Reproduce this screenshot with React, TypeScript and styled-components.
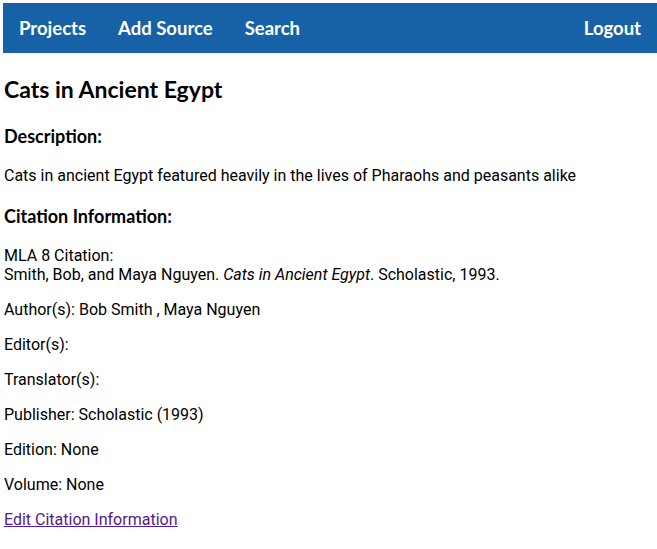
import { createGlobalStyle } from "styled-components";
import styled from "styled-components";

const GlobalStyle = createGlobalStyle`
  body {
    margin: 0;
    padding: 3px 0 0 3px;
    background: #ffffff;
    color: #000000;
    font-family: Roboto, "Liberation Sans", sans-serif;
    font-size: 16px;
  }
`;

type Field = {
  label: string;
  value: string;
};

const fields: Field[] = [
  { label: "Author(s):", value: "Bob Smith , Maya Nguyen" },
  { label: "Editor(s):", value: "" },
  { label: "Translator(s):", value: "" },
  { label: "Publisher:", value: "Scholastic (1993)" },
  { label: "Edition:", value: "None" },
  { label: "Volume:", value: "None" },
];

const App = () => {
  return (
    <>
      <GlobalStyle />
      <NavBar>
        <NavLink href="#">Projects</NavLink>
        <NavLink href="#">Add Source</NavLink>
        <NavLink href="#">Search</NavLink>
        <NavLink href="#" $right>
          Logout
        </NavLink>
      </NavBar>
      <Main>
        <Title>Cats in Ancient Egypt</Title>
        <Heading>Description:</Heading>
        <Text>
          Cats in ancient Egypt featured heavily in the lives of Pharaohs and
          peasants alike
        </Text>
        <Heading>Citation Information:</Heading>
        <Text>
          MLA 8 Citation:
          <br />
          Smith, Bob, and Maya Nguyen. <i>Cats in Ancient Egypt</i>.
          Scholastic, 1993.
        </Text>
        {fields.map((f) => (
          <Text key={f.label}>
            {f.label} {f.value}
          </Text>
        ))}
        <EditLink href="#">Edit Citation Information</EditLink>
      </Main>
    </>
  );
};

const NavBar = styled.nav`
  display: flex;
  align-items: center;
  height: 50px;
  padding: 0 16px;
  gap: 32px;
  background: #1762a7;
`;

const NavLink = styled.a<{ $right?: boolean }>`
  color: #ffffff;
  text-decoration: none;
  font-family: Lato, "Noto Sans", sans-serif;
  font-weight: 700;
  font-size: 18.5px;
  margin-left: ${(p) => (p.$right ? "auto" : "0")};
`;

const Main = styled.main`
  padding: 0 1px;
`;

const Title = styled.h1`
  font-family: Lato, "Noto Sans", sans-serif;
  font-weight: 700;
  font-size: 23px;
  margin: 22px 0 22px;
`;

const Heading = styled.h2`
  font-family: Lato, "Noto Sans", sans-serif;
  font-weight: 700;
  font-size: 18px;
  margin: 20px 0 19px;
`;

const Text = styled.p`
  margin: 16px 0;
`;

const EditLink = styled.a`
  color: #551a8b;
  text-decoration: underline;
`;

export default App;
